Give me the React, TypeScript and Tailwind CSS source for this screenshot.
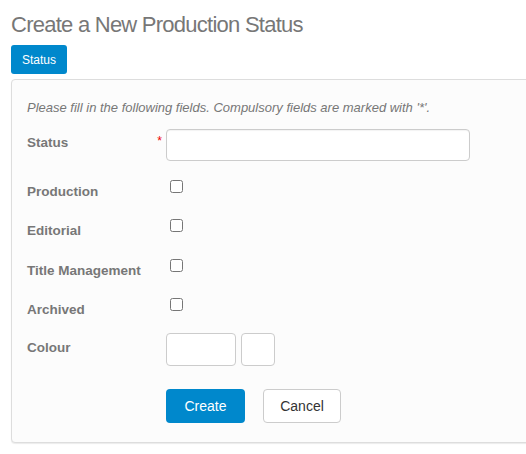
import React from 'react';

const labelCls = 'w-[139px] shrink-0 text-[13.5px] leading-[18px] font-bold text-[#777]';

function CheckRow({ label, className }: { label: string; className: string }) {
  return (
    <div className={`flex items-start ${className}`}>
      <div className={`${labelCls} mt-[3px]`}>{label}</div>
      <input type="checkbox" className="m-0 ml-[4px] w-[13px] h-[13px]" />
    </div>
  );
}

export default function App() {
  return (
    <div className="w-[526px] h-[454px] overflow-hidden bg-white font-['Liberation_Sans',Arial,sans-serif]">
      <div className="pl-[11px]">
        {/* heading */}
        <h1 className="pt-[12px] text-[22px] leading-[26px] tracking-[-0.75px] text-[#777] font-normal">
          Create a New Production Status
        </h1>
        <button className="mt-[7px] h-[29px] px-[11px] rounded-[3px] bg-[#0088cc] text-white text-[12px] leading-none">
          Status
        </button>

        {/* form panel */}
        <div className="mt-[5px] w-[530px] border border-[#dddddd] rounded-[4px] bg-[#fcfcfc] shadow-[0_1px_1px_rgba(0,0,0,0.08)] pl-[15px] pt-[19px] pb-[19px]">
          <p className="text-[13px] leading-[17px] italic text-[#777]">
            Please fill in the following fields. Compulsory fields are marked with '*'.
          </p>

          <div className="flex flex-col">
            <div className="mt-[13px] flex items-start">
              <div className={`${labelCls} pt-[5px] flex justify-between`}>
                <span>Status</span>
                <span className="text-[#e00] font-normal text-[12px] leading-none mt-[1px] pr-[4px]">*</span>
              </div>
              <input
                type="text"
                className="w-[304px] h-[32px] border border-[#cccccc] rounded-[4px] bg-white shadow-[inset_0_1px_1px_rgba(0,0,0,0.05)]"
              />
            </div>

            <CheckRow label="Production" className="mt-[19px] h-[39px]" />
            <CheckRow label="Editorial" className="h-[40px]" />
            <CheckRow label="Title Management" className="h-[39px]" />
            <CheckRow label="Archived" className="h-[35px]" />

            <div className="flex items-start">
              <div className={`${labelCls} pt-[6px]`}>Colour</div>
              <div className="flex gap-[5px]">
                <input type="text" className="w-[70px] h-[33px] border border-[#cccccc] rounded-[4px] bg-white" />
                <input type="text" className="w-[34px] h-[33px] border border-[#cccccc] rounded-[4px] bg-white" />
              </div>
            </div>

            <div className="mt-[23px] flex gap-[18px] pl-[139px]">
              <button className="w-[79px] h-[34px] rounded-[4px] bg-[#0088cc] text-white text-[14px]">
                Create
              </button>
              <button className="w-[78px] h-[34px] rounded-[4px] border border-[#cccccc] bg-white text-[#333] text-[14px]">
                Cancel
              </button>
            </div>
          </div>
        </div>
      </div>
    </div>
  );
}
